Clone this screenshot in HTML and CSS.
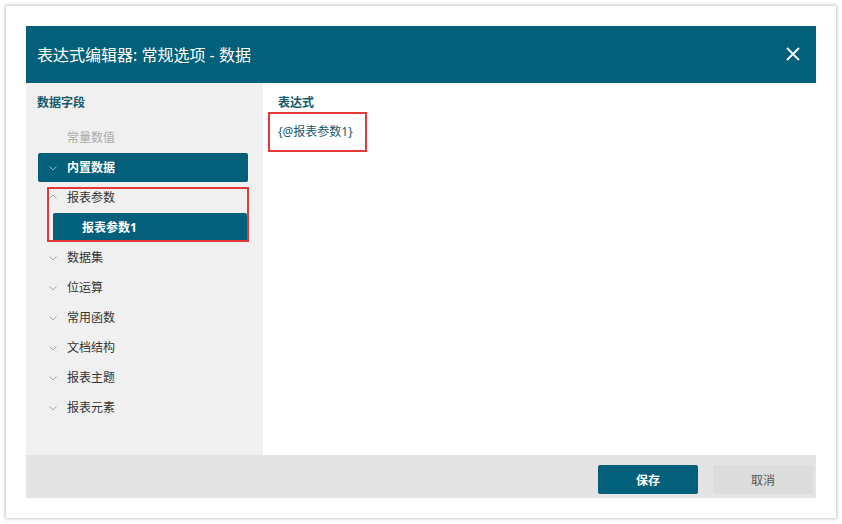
FILE: index.html
```html
<!DOCTYPE html>
<html>
  <head>
    <link rel="stylesheet" href="styles.css">
  </head>
  <body>
    <div class="frame">
      <div class="dialog">
        <div class="header">
          <span class="title">表达式编辑器: 常规选项 - 数据</span>
          <svg class="close" width="14" height="14" viewBox="0 0 14 14">
            <path d="M1 1 L13 13 M13 1 L1 13" stroke="#fff" stroke-width="1.8" fill="none"/>
          </svg>
        </div>
        <div class="body">
          <div class="fields">
            <div class="section-title">数据字段</div>
            <div class="tree">
              <div class="row disabled">常量数值</div>
              <div class="row selected">
                <svg class="chev" width="8" height="5" viewBox="0 0 8 5"><polyline points="0.5,0.5 4,4 7.5,0.5"/></svg>
                内置数据
              </div>
              <div class="group">
                <div class="row">
                  <svg class="chev up" width="8" height="5" viewBox="0 0 8 5"><polyline points="0.5,4.5 4,1 7.5,4.5"/></svg>
                  报表参数
                </div>
                <div class="row selected child">报表参数1</div>
              </div>
              <div class="row">
                <svg class="chev" width="8" height="5" viewBox="0 0 8 5"><polyline points="0.5,0.5 4,4 7.5,0.5"/></svg>
                数据集
              </div>
              <div class="row">
                <svg class="chev" width="8" height="5" viewBox="0 0 8 5"><polyline points="0.5,0.5 4,4 7.5,0.5"/></svg>
                位运算
              </div>
              <div class="row">
                <svg class="chev" width="8" height="5" viewBox="0 0 8 5"><polyline points="0.5,0.5 4,4 7.5,0.5"/></svg>
                常用函数
              </div>
              <div class="row">
                <svg class="chev" width="8" height="5" viewBox="0 0 8 5"><polyline points="0.5,0.5 4,4 7.5,0.5"/></svg>
                文档结构
              </div>
              <div class="row">
                <svg class="chev" width="8" height="5" viewBox="0 0 8 5"><polyline points="0.5,0.5 4,4 7.5,0.5"/></svg>
                报表主题
              </div>
              <div class="row">
                <svg class="chev" width="8" height="5" viewBox="0 0 8 5"><polyline points="0.5,0.5 4,4 7.5,0.5"/></svg>
                报表元素
              </div>
            </div>
          </div>
          <div class="editor">
            <div class="section-title">表达式</div>
            <div class="expr">{@报表参数1}</div>
          </div>
        </div>
        <div class="footer">
          <button class="btn primary">保存</button>
          <button class="btn">取消</button>
        </div>
      </div>
    </div>
  </body>
</html>
```

FILE: styles.css
```css
body {
    margin: 0;
    background: #fff;
    font-family: "Noto Sans", "Noto Sans CJK SC", sans-serif;
}
.frame {
    margin: 6px;
    width: 830px;
    height: 512px;
    box-sizing: border-box;
    padding: 20px;
    background: #fff;
    box-shadow: 0 0 3px 1px rgba(0, 0, 0, 0.22);
}
.dialog {
    display: flex;
    flex-direction: column;
    height: 100%;
}
.header {
    height: 57px;
    background: #03607a;
    display: flex;
    align-items: center;
    justify-content: space-between;
    padding: 0 16px 2px 11px;
    box-sizing: border-box;
    flex-shrink: 0;
}
.title {
    color: #fff;
    font-size: 16px;
}
.body {
    flex: 1;
    display: flex;
}
.fields {
    width: 237px;
    background: #f0f0f0;
    padding-top: 9px;
}
.section-title {
    font-size: 12px;
    font-weight: bold;
    line-height: 22px;
    color: #155a6e;
    padding-left: 11px;
}
.tree {
    margin-top: 9px;
}
.row {
    position: relative;
    height: 29px;
    margin: 1px 15px 0 12px;
    padding-left: 29px;
    line-height: 29px;
    font-size: 12px;
    color: #333;
}
.row.disabled {
    color: #aaa;
}
.row.selected {
    background: #03607a;
    color: #fff;
    font-weight: bold;
    border-radius: 2px;
}
.row.child {
    margin-left: 27px;
    margin-right: 16px;
}
.chev {
    position: absolute;
    left: 11px;
    top: 13px;
}
.chev polyline {
    fill: none;
    stroke: #a8a8a8;
    stroke-width: 1;
}
.row.selected .chev polyline {
    stroke: #8fb3c0;
}
.chev.up {
    top: 11px;
}
.group {
    position: relative;
}
.group::after {
    content: "";
    position: absolute;
    top: 4px;
    bottom: 0;
    left: 21px;
    right: 14px;
    border: 2px solid #e5383b;
}
.editor {
    flex: 1;
    background: #fff;
    padding: 9px 0 0 4px;
}
.expr {
    display: inline-block;
    margin: -2px 0 0 1px;
    padding: 10px 12px 11px 8px;
    border: 2px solid #e5383b;
    font-size: 12px;
    line-height: 15px;
    color: #155a6e;
}
.footer {
    height: 43px;
    background: #e4e4e4;
    display: flex;
    justify-content: flex-end;
    align-items: flex-start;
    gap: 15px;
    padding: 10px 3px 0 0;
    box-sizing: border-box;
    flex-shrink: 0;
}
.btn {
    width: 100px;
    height: 29px;
    border: none;
    border-radius: 2px;
    background: #dcdcdc;
    color: #555;
    font-family: inherit;
    font-size: 12px;
}
.btn.primary {
    background: #03607a;
    color: #fff;
    font-weight: bold;
}
```
